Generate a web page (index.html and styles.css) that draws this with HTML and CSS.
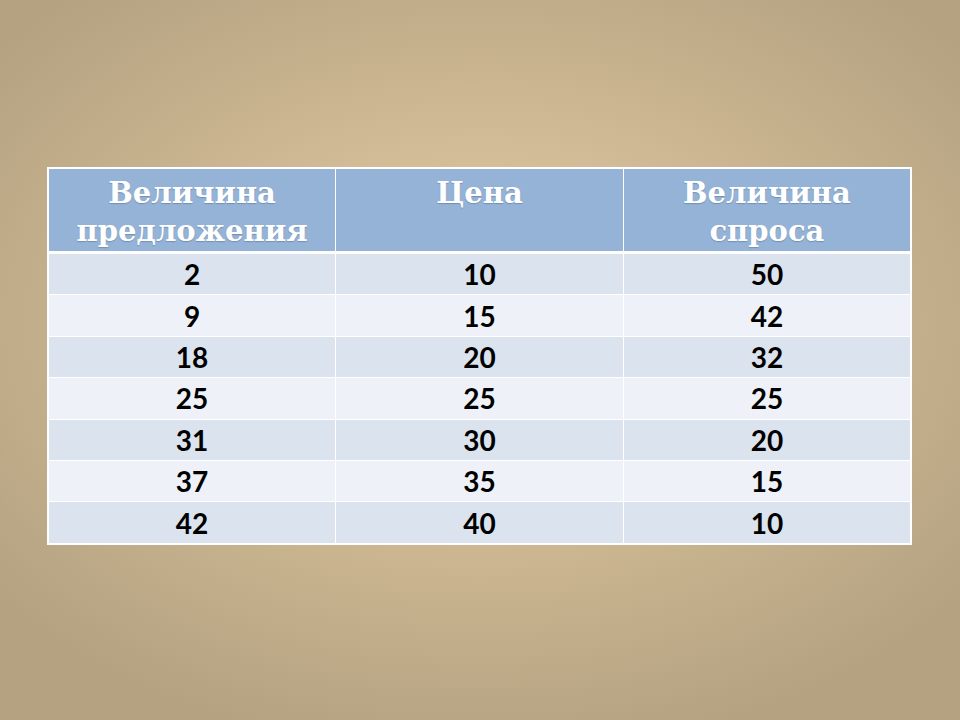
FILE: index.html
```html
<!DOCTYPE html>
<html lang="ru">
<head>
<meta charset="utf-8">
<title>Таблица</title>
<link rel="stylesheet" href="styles.css">
</head>
<body>
<main class="slide">
  <table class="data">
    <thead>
      <tr>
        <th>Величина<br>предложения</th>
        <th>Цена</th>
        <th>Величина<br>спроса</th>
      </tr>
    </thead>
    <tbody>
      <tr class="odd"><td>2</td><td>10</td><td>50</td></tr>
      <tr class="even"><td>9</td><td>15</td><td>42</td></tr>
      <tr class="odd"><td>18</td><td>20</td><td>32</td></tr>
      <tr class="even"><td>25</td><td>25</td><td>25</td></tr>
      <tr class="odd"><td>31</td><td>30</td><td>20</td></tr>
      <tr class="even"><td>37</td><td>35</td><td>15</td></tr>
      <tr class="odd"><td>42</td><td>40</td><td>10</td></tr>
    </tbody>
  </table>
</main>
</body>
</html>
```

FILE: styles.css
```css
html, body {
  margin: 0;
  padding: 0;
}
body {
  width: 960px;
  height: 720px;
  overflow: hidden;
  background: radial-gradient(ellipse 65% 60% at 50% 45%, #dfcaa4 0%, #d7c19b 30%, #c6b18d 65%, #b4a281 100%);
}
.slide {
  box-sizing: border-box;
  width: 960px;
  height: 720px;
  padding: 167px 0 0 47px;
}
.data {
  border-collapse: collapse;
  width: 865px;
  table-layout: fixed;
  border: 2px solid #ffffff;
}
.data th {
  background: #95b3d6;
  color: #ffffff;
  font-family: "DejaVu Serif", "Liberation Serif", serif;
  font-weight: bold;
  font-size: 29px;
  line-height: 38px;
  height: 77px;
  padding: 5px 2px 0;
  vertical-align: top;
  text-align: center;
  text-shadow: 0 1px 1px rgba(60, 80, 110, 0.35);
  border-left: 1px solid #ffffff;
  border-right: 1px solid #ffffff;
  border-bottom: 3px solid #ffffff;
}
.data td {
  font-family: Lato, "Open Sans", sans-serif;
  font-weight: bold;
  font-size: 28px;
  color: #000000;
  text-align: center;
  vertical-align: middle;
  height: 40.4px;
  padding: 0;
  border: 1px solid #ffffff;
}
.odd td {
  background: #dbe3ee;
}
.even td {
  background: #eef2f8;
}
```
